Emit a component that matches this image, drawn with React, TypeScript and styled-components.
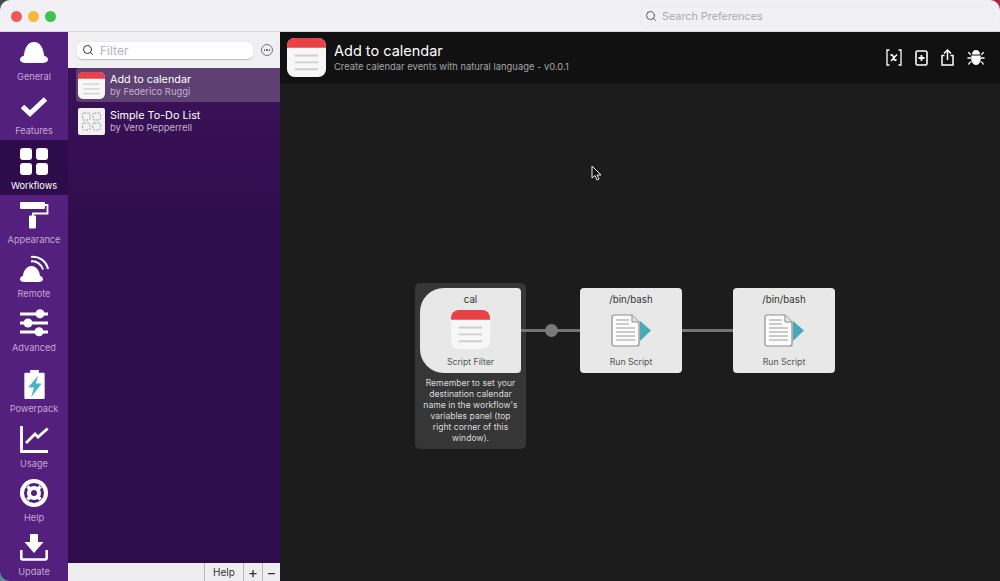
import React from 'react';
import styled, { createGlobalStyle } from 'styled-components';
import { Search } from 'lucide-react';

const Global = createGlobalStyle`
  html, body {
    margin: 0;
    height: 100%;
    overflow: hidden;
    background:
      linear-gradient(to right, #4a4a4e 50%, #b0243c 50%) top / 100% 50% no-repeat,
      linear-gradient(to right, #5b8f8c 50%, #1c1c1c 50%) bottom / 100% 50% no-repeat;
    font-family: Inter, "Liberation Sans", sans-serif;
  }
`;

const Window = styled.div`
  width: 1000px;
  height: 581px;
  border-radius: 10px 10px 0 10px;
  overflow: hidden;
  display: grid;
  grid-template-rows: 32px 1fr;
`;

const TitleBar = styled.header`
  background: #f1f1f5;
  display: flex;
  align-items: center;
  justify-content: space-between;
  padding: 1px 6px 0 11px;
  border-bottom: 1px solid #d8d8dc;
  box-sizing: border-box;
`;

const Lights = styled.div`
  display: flex;
  gap: 6px;
`;

const Light = styled.span<{ $color: string }>`
  width: 11px;
  height: 11px;
  border-radius: 50%;
  background: ${p => p.$color};
`;

const PrefSearch = styled.div`
  width: 354px;
  height: 21px;
  border: 1px solid #ebebef;
  border-radius: 5px;
  box-sizing: border-box;
  display: flex;
  align-items: center;
  gap: 5px;
  padding-left: 4px;
  font-size: 10.8px;
  color: #a9a9ad;
  svg { color: #55555a; }
`;

const Body = styled.div`
  display: grid;
  grid-template-columns: 68px 212px 1fr;
  min-height: 0;
`;

const Tabs = styled.nav`
  background: #53207d;
  display: flex;
  flex-direction: column;
`;

const Tab = styled.div<{ $active?: boolean; $gap?: boolean }>`
  height: 54.2px;
  flex: none;
  margin-top: ${p => (p.$gap ? '7px' : 0)};
  background: ${p => (p.$active ? '#2e0c4c' : 'transparent')};
  color: ${p => (p.$active ? '#fff' : '#c3a8d6')};
  display: flex;
  flex-direction: column;
  align-items: center;
  justify-content: flex-end;
  padding-bottom: 3px;
  box-sizing: border-box;
  font-size: 9.2px;
  line-height: 12px;
  svg { display: block; margin-bottom: 4px; }
`;

const ListPane = styled.section`
  display: flex;
  flex-direction: column;
  min-height: 0;
`;

const FilterBar = styled.div`
  height: 36px;
  flex: none;
  background: #f0f0f2;
  display: flex;
  align-items: center;
  padding: 0 7px 0 9px;
  gap: 8px;
  box-sizing: border-box;
`;

const Filter = styled.div`
  flex: 1;
  height: 17px;
  background: #fff;
  border-radius: 5px;
  box-shadow: 0 0.5px 1px rgba(0, 0, 0, 0.2);
  display: flex;
  align-items: center;
  gap: 6px;
  padding-left: 5px;
  font-size: 12px;
  color: #b4b4b8;
  svg { color: #333; }
`;

const MoreButton = styled.span`
  width: 12px;
  height: 12px;
  border: 1px solid #77777b;
  border-radius: 50%;
  box-sizing: border-box;
  display: flex;
  align-items: center;
  justify-content: center;
  gap: 1px;
  i { width: 1.3px; height: 1.3px; border-radius: 50%; background: #55555a; }
`;

const WorkflowList = styled.div`
  flex: 1;
  background: linear-gradient(#3c1259, #300d4d 30%);
  display: flex;
  flex-direction: column;
  gap: 2px;
`;

const Row = styled.div<{ $selected?: boolean }>`
  height: 34px;
  margin-left: 8px;
  padding-left: 2px;
  flex: none;
  display: flex;
  align-items: center;
  gap: 5px;
  border-radius: 4px 0 0 4px;
  background: ${p => (p.$selected ? '#5e4072' : 'transparent')};
`;

const RowText = styled.div`
  display: flex;
  flex-direction: column;
`;

const RowTitle = styled.div`
  font-size: 10.8px;
  line-height: 14px;
  margin: 1px 0 -1px;
  color: #fff;
`;

const RowAuthor = styled.div`
  font-size: 9.4px;
  line-height: 12px;
  color: #c3b3cf;
`;

const Footer = styled.footer`
  height: 18px;
  flex: none;
  background: #eeeef0;
  display: flex;
  justify-content: flex-end;
  color: #333;
  font-size: 10px;
`;

const FooterButton = styled.div<{ $width: number; $big?: boolean }>`
  width: ${p => p.$width}px;
  border-left: 1px solid #b9b9bd;
  display: flex;
  align-items: center;
  justify-content: center;
  box-sizing: border-box;
  font-size: ${p => (p.$big ? '15px' : '10px')};
`;

const Main = styled.main`
  background: #1c1c1c;
  display: flex;
  flex-direction: column;
  min-width: 0;
`;

const Header = styled.div`
  height: 51px;
  flex: none;
  background: #111112;
  display: flex;
  align-items: center;
  padding: 0 15px 0 7px;
  gap: 8px;
`;

const HeaderText = styled.div`
  flex: 1;
  display: flex;
  flex-direction: column;
  margin-top: -2px;
`;

const HeaderTitle = styled.h1`
  margin: 0;
  font-size: 14.5px;
  font-weight: 400;
  line-height: 19px;
  color: #fff;
`;

const HeaderSub = styled.div`
  font-size: 9.4px;
  line-height: 13px;
  color: #a6a6a6;
`;

const HeaderTools = styled.div`
  display: flex;
  align-items: center;
  gap: 13px;
  color: #fff;
`;

const Canvas = styled.div`
  flex: 1;
  position: relative;
`;

const Wire = styled.div<{ $x: number; $w: number }>`
  position: absolute;
  left: ${p => p.$x}px;
  width: ${p => p.$w}px;
  top: 246px;
  height: 3px;
  background: #747474;
`;

const WireDot = styled.div`
  position: absolute;
  left: 265px;
  top: 241px;
  width: 13px;
  height: 13px;
  border-radius: 50%;
  background: #7a7a7a;
`;

const NoteCard = styled.div`
  position: absolute;
  left: 135px;
  top: 200px;
  width: 111px;
  height: 166px;
  padding: 5px;
  box-sizing: border-box;
  background: #363636;
  border-radius: 5px;
`;

const Note = styled.div`
  margin-top: 5px;
  color: #dcdcdc;
  font-size: 8.6px;
  line-height: 11px;
  text-align: center;
`;

const Node = styled.div<{ $x?: number; $filter?: boolean }>`
  position: ${p => (p.$x === undefined ? 'relative' : 'absolute')};
  left: ${p => (p.$x === undefined ? 'auto' : `${p.$x}px`)};
  top: ${p => (p.$x === undefined ? 'auto' : '205px')};
  width: ${p => (p.$filter ? '101px' : '102px')};
  height: 85px;
  background: #e8e8e8;
  border-radius: ${p => (p.$filter ? '24px 4px 4px 24px' : '4px')};
  display: flex;
  flex-direction: column;
  align-items: center;
  box-sizing: border-box;
  padding-top: 5px;
`;

const NodeTitle = styled.div`
  font-size: 9.7px;
  line-height: 13px;
  color: #333;
`;

const NodeIcon = styled.div<{ $lift: number }>`
  flex: 1;
  display: flex;
  align-items: center;
  justify-content: center;
  padding-bottom: ${p => p.$lift}px;
`;

const NodeLabel = styled.div`
  font-size: 8.7px;
  line-height: 11px;
  color: #555;
  margin-bottom: 5px;
`;

const Pointer = styled.svg`
  position: absolute;
  left: 311px;
  top: 82px;
`;

const CalendarIcon = ({ size }: { size: number }) => (
  <svg width={size} height={size} viewBox="0 0 40 40" style={{ flex: 'none' }}>
    <rect width="40" height="40" rx="8" fill="#f7f7f7" />
    <path d="M0 10V8a8 8 0 0 1 8-8h24a8 8 0 0 1 8 8v2z" fill="#e8414a" />
    <path d="M8 18h24M8 25h24M8 32h24" stroke="#cfcfcf" strokeWidth="2" />
  </svg>
);

const TodoIcon = () => (
  <svg width="27" height="27" viewBox="0 0 27 27" style={{ flex: 'none' }}>
    <rect width="27" height="27" rx="2" fill="#f2f2f2" />
    <g fill="none" stroke="#999" strokeDasharray="2 1.300">
      <rect x="4.500" y="5" width="7.500" height="7" rx="1.500" />
      <rect x="15" y="5" width="7.500" height="7" rx="1.500" />
      <rect x="4.500" y="15" width="7.500" height="7" rx="1.500" />
      <rect x="15" y="15" width="7.500" height="7" rx="1.500" />
    </g>
  </svg>
);

const ScriptIcon = () => (
  <svg width="40" height="33" viewBox="0 0 40 33">
    <path d="M1 3a2 2 0 0 1 2-2h18l7 7v22a2 2 0 0 1-2 2H3a2 2 0 0 1-2-2z" fill="#fbfbfb" stroke="#8d8d8d" strokeWidth="1.200" />
    <path d="M21 1v7h7" fill="#e2e2e2" stroke="#8d8d8d" />
    <path d="M5 6h13M5 10h13M5 14h19M5 18h19M5 22h19M5 26h19" stroke="#9a9a9a" />
    <path d="M29 7l11 9.500L29 27z" fill="#4aa9b8" />
  </svg>
);

const GeneralIcon = () => (
  <svg width="30" height="30" viewBox="0 0 30 30">
    <path d="M7 26c-4 0-6-1.500-6-3.500 0-2 2-3.200 4-4C5.500 11 9 5 15 5s9.500 6 10 13.500c2 .8 4 2 4 4 0 2-2 3.500-6 3.500z" fill="#fff" />
  </svg>
);

const FeaturesIcon = () => (
  <svg width="30" height="30" viewBox="0 0 30 30">
    <path d="M3.500 15.500l7.500 7L26.500 8" fill="none" stroke="#fff" strokeWidth="5" />
  </svg>
);

const WorkflowsIcon = () => (
  <svg width="30" height="30" viewBox="0 0 30 30" fill="#fff">
    <rect x="1" y="2" width="12" height="12" rx="3" />
    <rect x="17" y="2" width="12" height="12" rx="3" />
    <rect x="1" y="17" width="12" height="12" rx="3" />
    <rect x="17" y="17" width="12" height="12" rx="3" />
  </svg>
);

const AppearanceIcon = () => (
  <svg width="30" height="30" viewBox="0 0 30 30">
    <rect x="1" y="2" width="25" height="7" rx="1" fill="#fff" />
    <path d="M26 5h2.500v8.500h-14.500v3" fill="none" stroke="#fff" strokeWidth="1.800" />
    <rect x="10" y="15.500" width="7" height="13" rx="1" fill="#fff" />
  </svg>
);

const RemoteIcon = () => (
  <svg width="30" height="30" viewBox="0 0 30 30">
    <path d="M6 28c-3.500 0-5-1.200-5-3 0-1.500 1.500-2.500 3-3.200C4.500 16.500 8 12 12.500 12s8 4.500 8.500 9.800c1.500.7 3 1.700 3 3.200 0 1.800-1.500 3-5 3z" fill="#fff" />
    <path d="M12 7.500c5-1 10.500 2.500 12 8M12 3c7.500-1 15 3.500 17 12" fill="none" stroke="#fff" strokeWidth="2" />
  </svg>
);

const AdvancedIcon = () => (
  <svg width="30" height="30" viewBox="0 0 30 30" fill="#fff">
    <rect x="1" y="4.500" width="28" height="3" />
    <rect x="1" y="13.500" width="28" height="3" />
    <rect x="1" y="22.500" width="28" height="3" />
    <circle cx="21" cy="5.800" r="4.500" />
    <circle cx="9" cy="15" r="4.500" />
    <circle cx="20" cy="23.800" r="4.500" />
  </svg>
);

const PowerpackIcon = () => (
  <svg width="21" height="30" viewBox="0 0 21 31">
    <path d="M6 1h9v3h5a1 1 0 0 1 1 1v25a1 1 0 0 1-1 1H1a1 1 0 0 1-1-1V5a1 1 0 0 1 1-1h5z" fill="#fff" />
    <path d="M14 7L4 19h6l-3 10 11-14h-6z" fill="#45b5c4" />
  </svg>
);

const UsageIcon = () => (
  <svg width="30" height="30" viewBox="0 0 30 30" fill="none" stroke="#fff">
    <path d="M2.500 2v25.500H29" strokeWidth="2.800" />
    <path d="M7 19l9-9 3 3 9.700-8.500" strokeWidth="2.800" />
  </svg>
);

const HelpIcon = () => (
  <svg width="30" height="30" viewBox="0 0 30 30">
    <circle cx="15" cy="15" r="14" fill="#fff" />
    <circle cx="15" cy="15" r="8.500" fill="none" stroke="#53207d" strokeWidth="3" />
    <path d="M8.500 8.500l4 4M21.500 8.500l-4 4M8.500 21.500l4-4M21.500 21.500l-4-4" stroke="#fff" strokeWidth="3.500" />
    <circle cx="15" cy="15" r="3" fill="#53207d" />
  </svg>
);

const UpdateIcon = () => (
  <svg width="30" height="30" viewBox="0 0 30 30">
    <path d="M11 2h8v8h5.500L15 21 5.500 10H11z" fill="#fff" />
    <path d="M2.300 18v8a1.500 1.500 0 0 0 1.500 1.500h22.400a1.500 1.500 0 0 0 1.500-1.500v-8" fill="none" stroke="#fff" strokeWidth="2.600" />
  </svg>
);

const tabs = [
  { label: 'General', icon: <GeneralIcon /> },
  { label: 'Features', icon: <FeaturesIcon /> },
  { label: 'Workflows', icon: <WorkflowsIcon />, active: true },
  { label: 'Appearance', icon: <AppearanceIcon /> },
  { label: 'Remote', icon: <RemoteIcon /> },
  { label: 'Advanced', icon: <AdvancedIcon /> },
  { label: 'Powerpack', icon: <PowerpackIcon />, gap: true },
  { label: 'Usage', icon: <UsageIcon /> },
  { label: 'Help', icon: <HelpIcon /> },
  { label: 'Update', icon: <UpdateIcon /> },
];

const RunScriptNode = ({ x }: { x: number }) => (
  <Node $x={x}>
    <NodeTitle>/bin/bash</NodeTitle>
    <NodeIcon $lift={2}><ScriptIcon /></NodeIcon>
    <NodeLabel>Run Script</NodeLabel>
  </Node>
);

export default function App() {
  return (
    <Window>
      <Global />
      <TitleBar>
        <Lights>
          <Light $color="#ee5a57" />
          <Light $color="#f5b83c" />
          <Light $color="#3fc24f" />
        </Lights>
        <PrefSearch>
          <Search size={12} />
          Search Preferences
        </PrefSearch>
      </TitleBar>
      <Body>
        <Tabs>
          {tabs.map(t => (
            <Tab key={t.label} $active={t.active} $gap={t.gap}>
              {t.icon}
              {t.label}
            </Tab>
          ))}
        </Tabs>
        <ListPane>
          <FilterBar>
            <Filter>
              <Search size={12} />
              Filter
            </Filter>
            <MoreButton><i /><i /><i /></MoreButton>
          </FilterBar>
          <WorkflowList>
            <Row $selected>
              <CalendarIcon size={27} />
              <RowText>
                <RowTitle>Add to calendar</RowTitle>
                <RowAuthor>by Federico Ruggi</RowAuthor>
              </RowText>
            </Row>
            <Row>
              <TodoIcon />
              <RowText>
                <RowTitle>Simple To-Do List</RowTitle>
                <RowAuthor>by Vero Pepperrell</RowAuthor>
              </RowText>
            </Row>
          </WorkflowList>
          <Footer>
            <FooterButton $width={39}>Help</FooterButton>
            <FooterButton $width={19} $big>+</FooterButton>
            <FooterButton $width={18} $big>−</FooterButton>
          </Footer>
        </ListPane>
        <Main>
          <Header>
            <CalendarIcon size={39} />
            <HeaderText>
              <HeaderTitle>Add to calendar</HeaderTitle>
              <HeaderSub>Create calendar events with natural language - v0.0.1</HeaderSub>
            </HeaderText>
            <HeaderTools>
              <svg width="16" height="17" viewBox="0 0 16 17" fill="none" stroke="#fff" strokeWidth="1.300">
                <path d="M3.500 1H1v15h2.500M12.500 1H15v15h-2.500" />
                <path d="M4.500 6.500c1.500-1.500 2.500 0 3 2s1.500 3.500 3 2M11 5.500L5 12" strokeWidth="1.500" />
              </svg>
              <svg width="13" height="16" viewBox="0 0 13 16" fill="none" stroke="#fff" strokeWidth="1.600">
                <rect x="1" y="1" width="11" height="14" rx="1.500" />
                <path d="M3.500 8h6M6.500 5v6" strokeWidth="1.800" />
              </svg>
              <svg width="13" height="17" viewBox="0 0 13 17" fill="none" stroke="#fff" strokeWidth="1.500">
                <path d="M3.500 6.500H1V16h11V6.500H9.500M6.500 11V1M3 4.500L6.500 1 10 4.500" />
              </svg>
              <svg width="18" height="17" viewBox="0 0 18 17">
                <path d="M5 5.500C5 2.500 6.800 1 9 1s4 1.500 4 4.500z" fill="#fff" />
                <path d="M4.500 6.500h9c1 4-.5 9.500-4.500 9.500s-5.500-5.500-4.500-9.500z" fill="#fff" />
                <path d="M4 5.500C2.500 5.500 2 4.500 1.500 3M14 5.500c1.500 0 2-1 2.500-2.500M4 9H.5M14 9h3.500M4.500 12.500C3 13 2 14 1.500 15.500M13.500 12.500c1.500.5 2.500 1.500 3 3" fill="none" stroke="#fff" strokeWidth="1.300" />
              </svg>
            </HeaderTools>
          </Header>
          <Canvas>
            <NoteCard>
              <Node $filter>
                <NodeTitle>cal</NodeTitle>
                <NodeIcon $lift={4}><CalendarIcon size={39} /></NodeIcon>
                <NodeLabel>Script Filter</NodeLabel>
              </Node>
              <Note>Remember to set your destination calendar name in the workflow's variables panel (top right corner of this window).</Note>
            </NoteCard>
            <Wire $x={241} $w={59} />
            <WireDot />
            <Wire $x={402} $w={51} />
            <RunScriptNode x={300} />
            <RunScriptNode x={453} />
            <Pointer width="12" height="16" viewBox="0 0 12 16">
              <path d="M1 1v12l3-2.500L6 15l2-1-2-4h4z" fill="#111" stroke="#eee" strokeWidth="1" />
            </Pointer>
          </Canvas>
        </Main>
      </Body>
    </Window>
  );
}
